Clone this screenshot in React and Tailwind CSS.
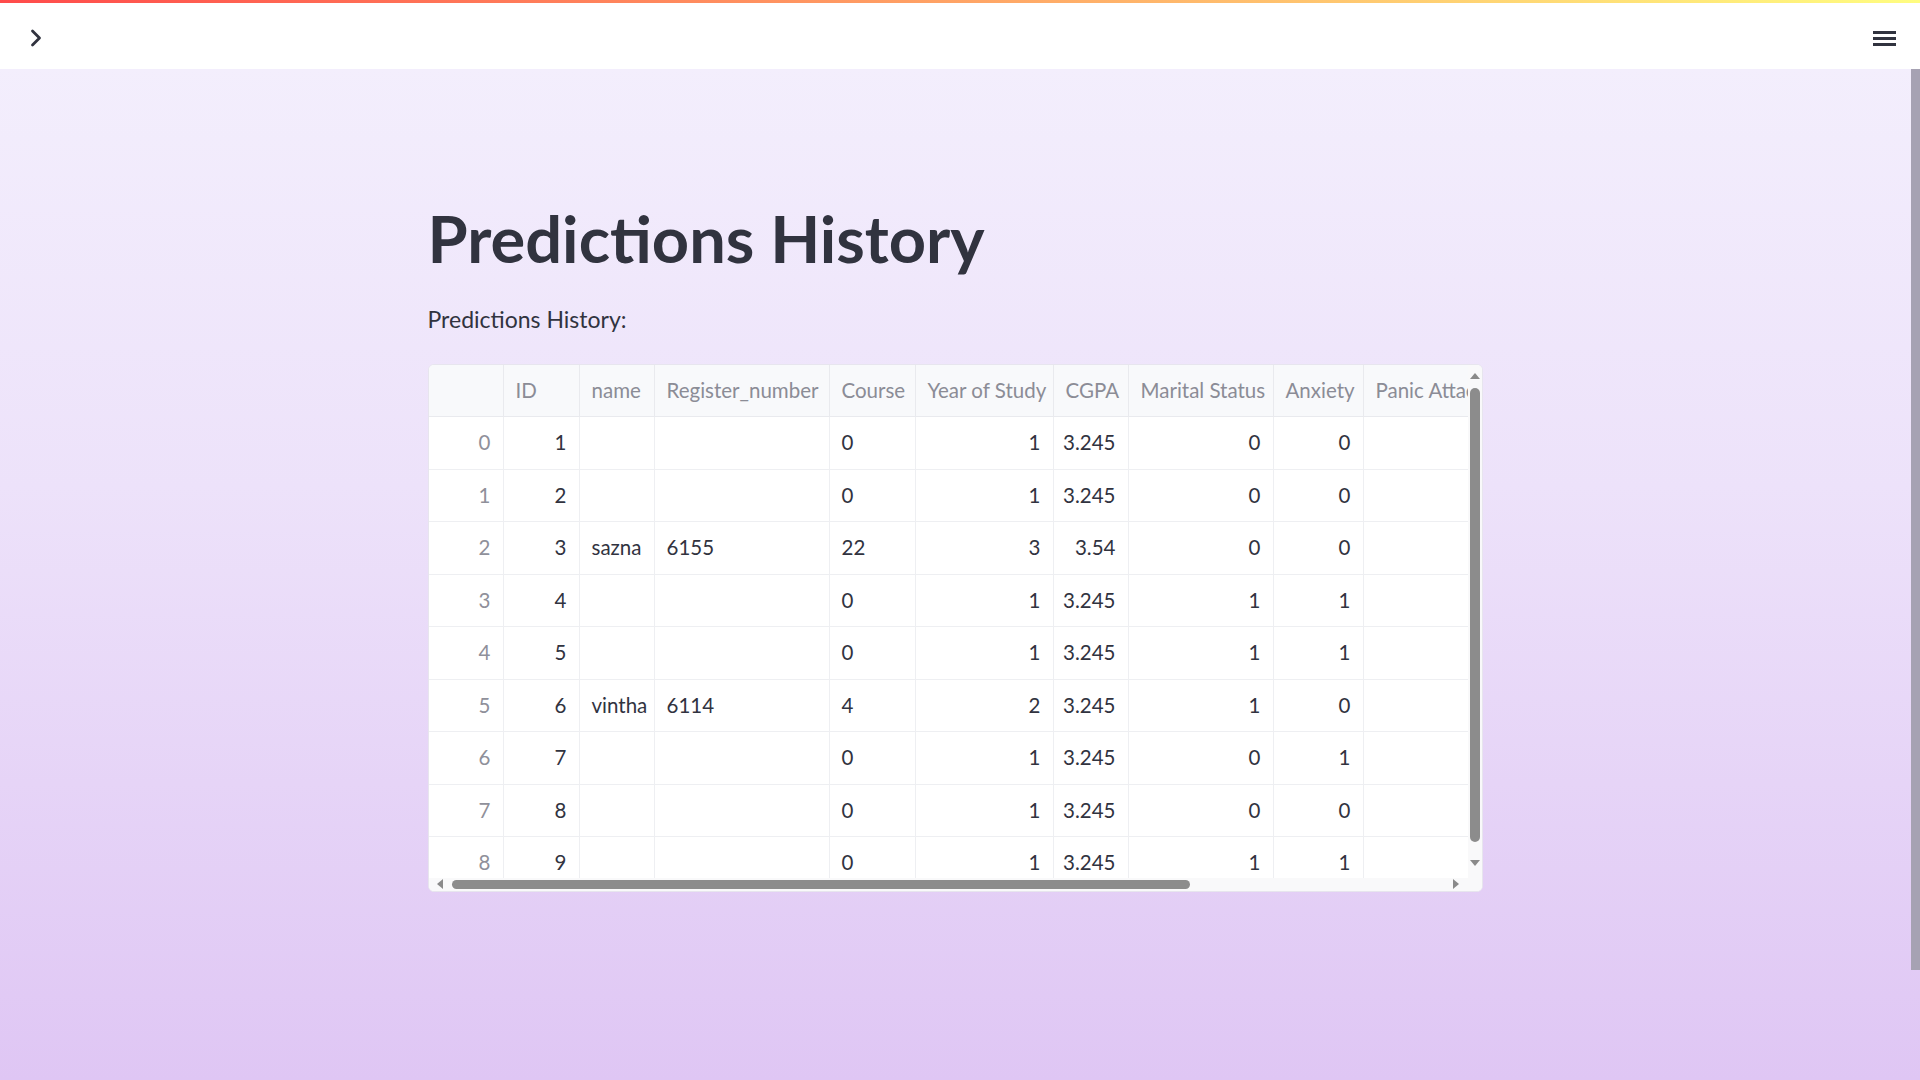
import React from 'react';

const columns = [
  { key: 'idx', label: '', w: 'w-[75px]', align: 'right', muted: true },
  { key: 'id', label: 'ID', w: 'w-[76px]', align: 'right' },
  { key: 'name', label: 'name', w: 'w-[75px]', align: 'left' },
  { key: 'reg', label: 'Register_number', w: 'w-[175px]', align: 'left' },
  { key: 'course', label: 'Course', w: 'w-[86px]', align: 'left' },
  { key: 'year', label: 'Year of Study', w: 'w-[138px]', align: 'right' },
  { key: 'cgpa', label: 'CGPA', w: 'w-[75px]', align: 'right' },
  { key: 'marital', label: 'Marital Status', w: 'w-[145px]', align: 'right' },
  { key: 'anxiety', label: 'Anxiety', w: 'w-[90px]', align: 'right' },
  { key: 'panic', label: 'Panic Attack', w: 'w-[140px]', align: 'right' },
];

const rows = [
  { idx: 0, id: 1, name: '', reg: '', course: '0', year: 1, cgpa: '3.245', marital: 0, anxiety: 0, panic: '' },
  { idx: 1, id: 2, name: '', reg: '', course: '0', year: 1, cgpa: '3.245', marital: 0, anxiety: 0, panic: '' },
  { idx: 2, id: 3, name: 'sazna', reg: '6155', course: '22', year: 3, cgpa: '3.54', marital: 0, anxiety: 0, panic: '' },
  { idx: 3, id: 4, name: '', reg: '', course: '0', year: 1, cgpa: '3.245', marital: 1, anxiety: 1, panic: '' },
  { idx: 4, id: 5, name: '', reg: '', course: '0', year: 1, cgpa: '3.245', marital: 1, anxiety: 1, panic: '' },
  { idx: 5, id: 6, name: 'vintha', reg: '6114', course: '4', year: 2, cgpa: '3.245', marital: 1, anxiety: 0, panic: '' },
  { idx: 6, id: 7, name: '', reg: '', course: '0', year: 1, cgpa: '3.245', marital: 0, anxiety: 1, panic: '' },
  { idx: 7, id: 8, name: '', reg: '', course: '0', year: 1, cgpa: '3.245', marital: 0, anxiety: 0, panic: '' },
  { idx: 8, id: 9, name: '', reg: '', course: '0', year: 1, cgpa: '3.245', marital: 1, anxiety: 1, panic: '' },
];

const Arrow = ({ dir }) => {
  const pts = {
    up: '0,6 5,0 10,6',
    down: '0,0 10,0 5,6',
    left: '6,0 6,10 0,5',
    right: '0,0 0,10 6,5',
  }[dir];
  const vertical = dir === 'up' || dir === 'down';
  return (
    <svg width={vertical ? 10 : 6} height={vertical ? 6 : 10} viewBox={vertical ? '0 0 10 6' : '0 0 6 10'} className="shrink-0">
      <polygon points={pts} fill="#8a8a8a" />
    </svg>
  );
};

const DataTable = () => (
  <div className="w-[1055px] border border-[#e7e5ee] rounded-md overflow-hidden bg-white flex flex-col">
    <div className="flex">
      <div className="w-[1039px] h-[513px] overflow-hidden">
        <div className="flex w-max h-[52.5px] bg-[#f8f9fb]">
          {columns.map(c => (
            <div key={c.key} className={`${c.w} shrink-0 h-full flex items-center px-3 border-r border-b border-[#e9eaee] text-[#8b8c96] whitespace-nowrap`}>
              {c.label}
            </div>
          ))}
        </div>
        {rows.map(r => (
          <div key={r.idx} className="flex w-max h-[52.5px]">
            {columns.map(c => (
              <div
                key={c.key}
                className={`${c.w} shrink-0 h-full flex items-center px-3 border-r border-b border-[#eeeff2] whitespace-nowrap ${c.align === 'right' ? 'justify-end' : 'justify-start'} ${c.muted ? 'text-[#8f909a]' : 'text-[#31333f]'}`}
              >
                {r[c.key]}
              </div>
            ))}
          </div>
        ))}
      </div>
      <div className="w-[14px] h-[513px] bg-[#f9f9fa] flex flex-col items-center">
        <div className="mt-[8px]"><Arrow dir="up" /></div>
        <div className="mt-[9px] w-[10px] h-[454px] rounded-full bg-[#8c8c8c]" />
        <div className="mt-[18px]"><Arrow dir="down" /></div>
      </div>
    </div>
    <div className="flex h-[13px] bg-[#f9f9fa]">
      <div className="w-[1039px] flex items-center pl-[8px] pr-[9px]">
        <Arrow dir="left" />
        <div className="ml-[9px] w-[738px] h-[9px] rounded-full bg-[#8c8c8c]" />
        <div className="flex-1" />
        <Arrow dir="right" />
      </div>
      <div className="w-[14px]" />
    </div>
  </div>
);

const App = () => {
  return (
    <div className="w-[1920px] h-[1080px] overflow-hidden flex flex-col bg-[linear-gradient(180deg,#f4f0fd_0%,#ede2fa_45%,#dfc6f4_100%)] text-[#31333f] font-['Lato','Source_Sans_Pro',sans-serif]">
      <header className="h-[69px] shrink-0 bg-white flex flex-col">
        <div className="h-[3px] bg-[linear-gradient(90deg,#ff4b4b,#fffd80)]" />
        <div className="flex-1 flex items-center justify-between pl-[22px] pr-[24px]">
          <svg width="28" height="28" viewBox="0 0 24 24" fill="none" stroke="#31333f" strokeWidth="2.4" strokeLinecap="round" strokeLinejoin="round" className="mt-[4px]">
            <path d="m9 18 6-6-6-6" />
          </svg>
          <svg width="23" height="15" viewBox="0 0 23 15" className="mt-[5px]">
            <rect x="0" y="0" width="23" height="3" fill="#31333f" />
            <rect x="0" y="6" width="23" height="3" fill="#31333f" />
            <rect x="0" y="12" width="23" height="3" fill="#31333f" />
          </svg>
        </div>
      </header>
      <div className="flex-1 flex min-h-0">
        <main className="flex-1 flex justify-center">
          <div className="w-[1056px] pt-[130px]">
            <h1 className="text-[65px] font-bold leading-[1.2]">Predictions History</h1>
            <p className="mt-[25px] text-[23px] leading-[1.5]">Predictions History:</p>
            <div className="mt-[27px] text-[20.5px]">
              <DataTable />
            </div>
          </div>
        </main>
        <div className="w-[9px] shrink-0 flex flex-col">
          <div className="h-[901px] bg-[#a6a2b3]" />
        </div>
      </div>
    </div>
  );
};

export default App;
